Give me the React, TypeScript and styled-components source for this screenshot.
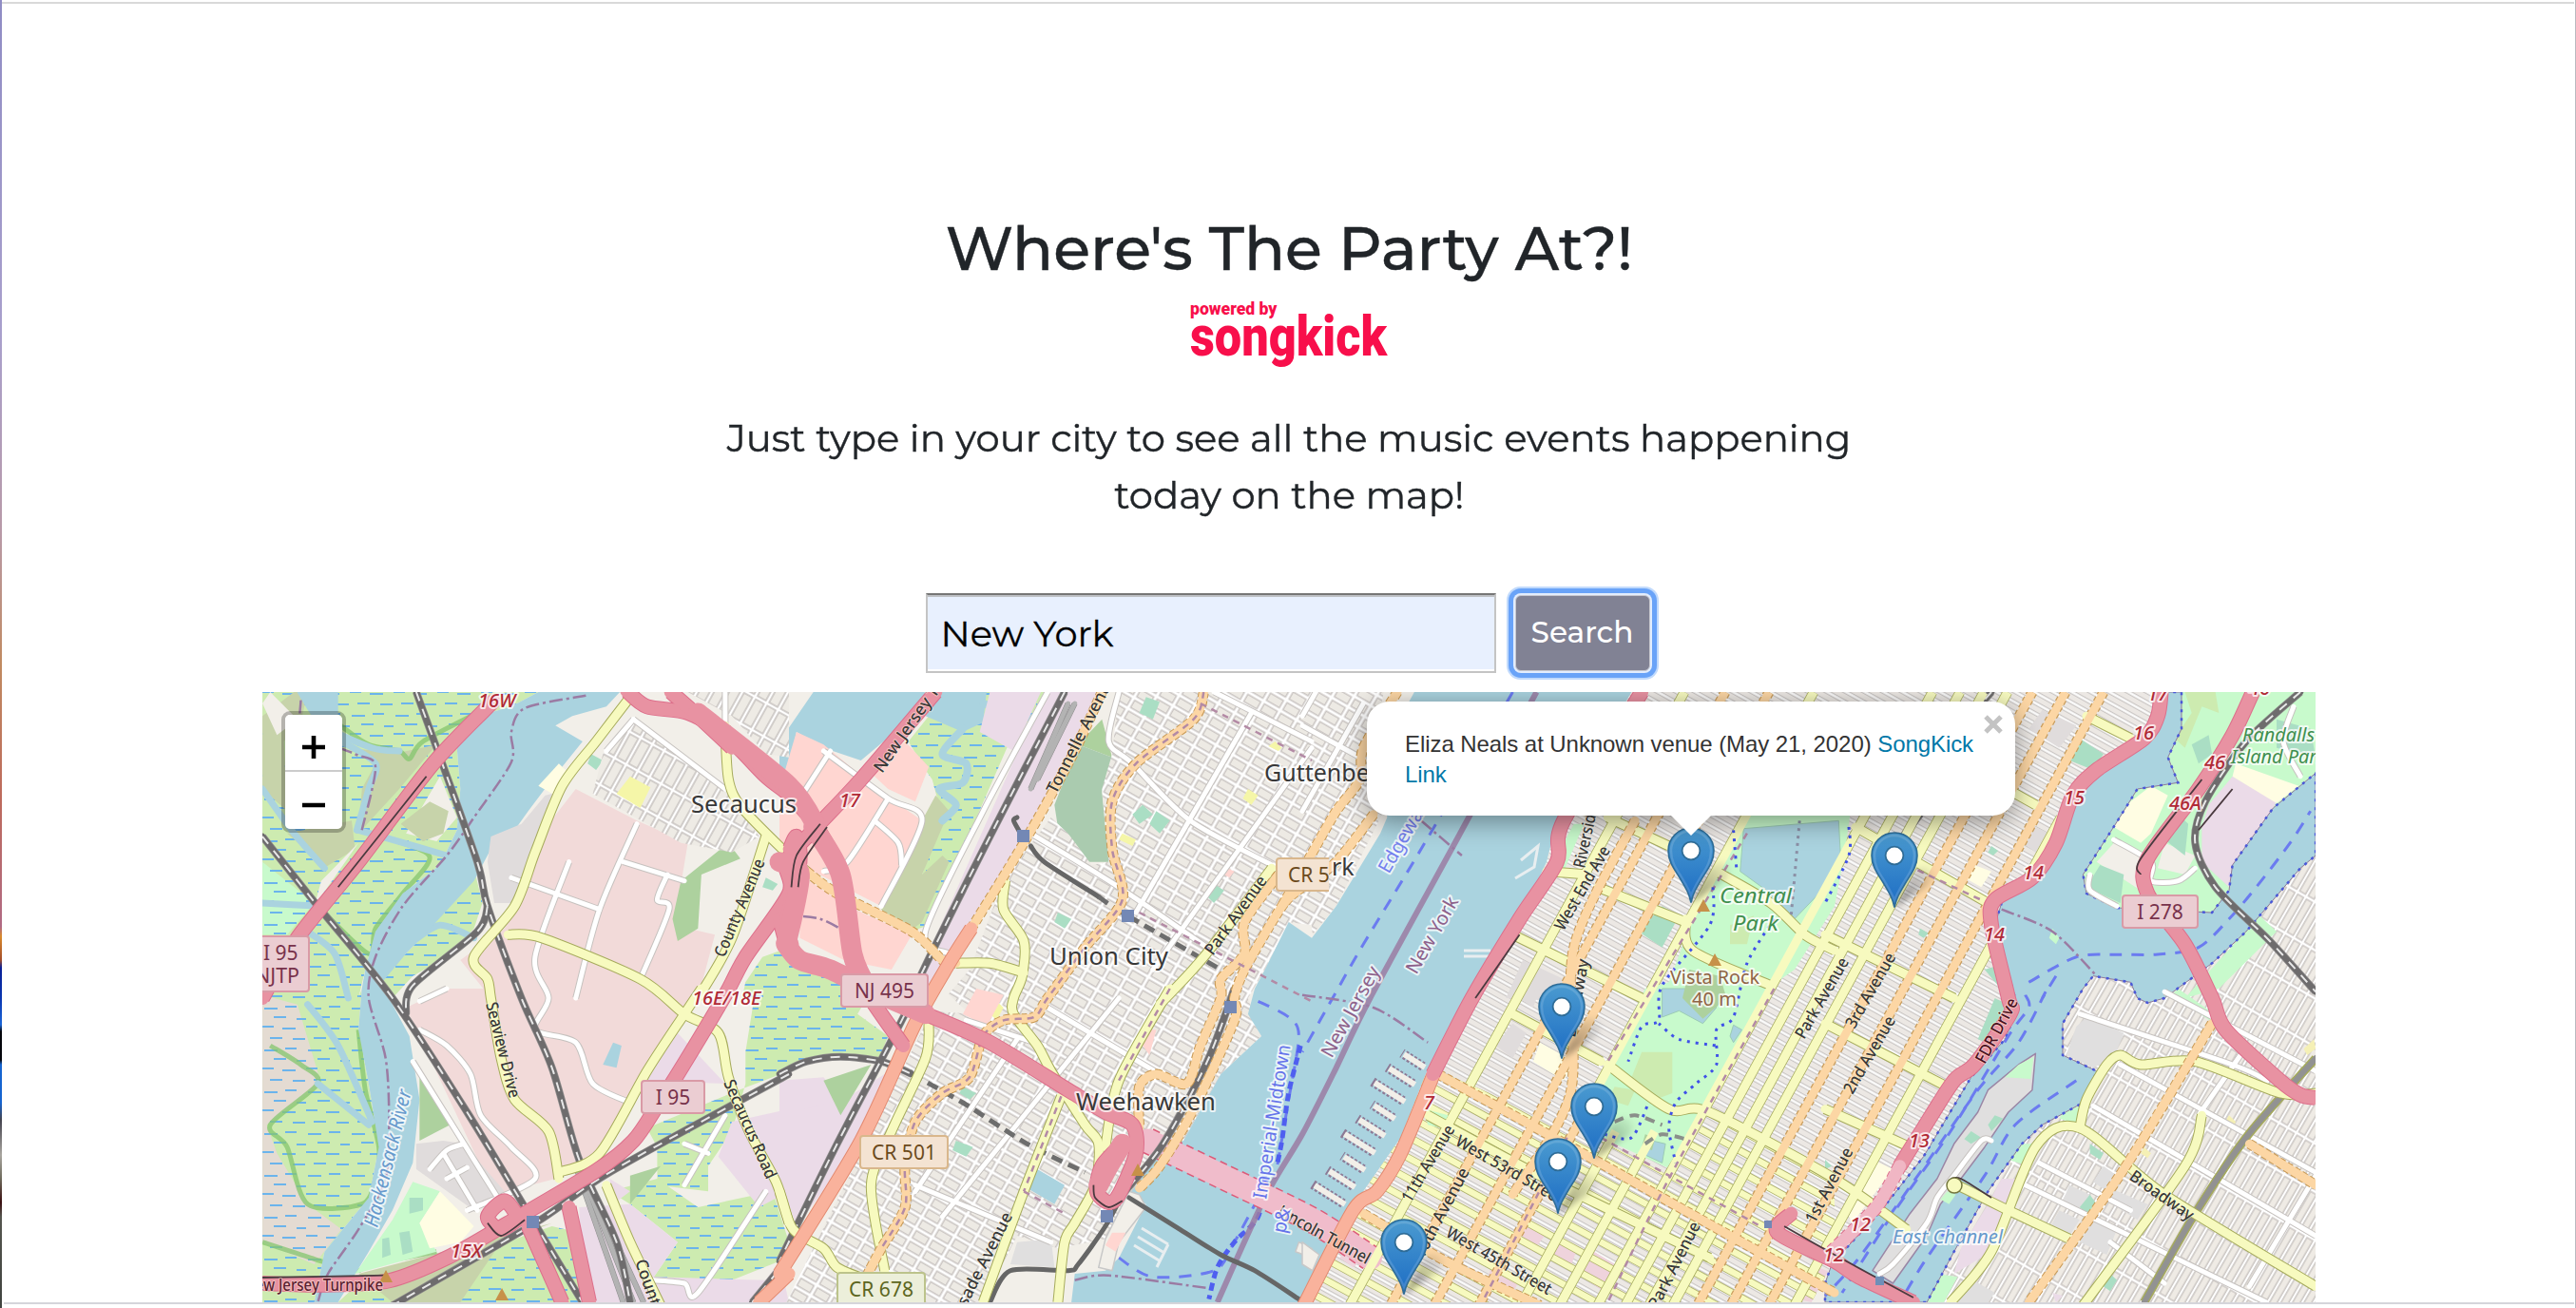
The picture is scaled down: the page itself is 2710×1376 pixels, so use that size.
import React, { useState } from "react";
import styled, { createGlobalStyle } from "styled-components";

const GlobalStyle = createGlobalStyle`
  *, *::before, *::after { box-sizing: border-box; }
  html, body { margin: 0; padding: 0; }
  body { background: #fff; color: #212529; font-family: Montserrat, Inter, sans-serif; overflow: hidden; }
`;

const Page = styled.div`
  display: grid;
  grid-template-columns: 2px 1fr 2px;
  height: 1376px;
  background: #fff;
`;

const DesktopEdge = styled.div`
  background: linear-gradient(180deg, #8f8cc4 0, #a9a0cc 350px, #b89aa8 560px, #c08a60 700px, #bd6a5c 840px,
    #b06a84 975px, #d98a2b 985px, #a34d2a 1010px, #0a1f96 1018px, #0a36b0 1050px, #1b66d8 1078px, #05060c 1085px,
    #05060c 1115px, #1664d0 1120px, #1664d0 1160px, #44434e 1178px, #a9a6a0 1215px, #6e6a5c 1240px, #3a0f10 1265px, #55564f 1280px, #40433f 1376px);
`;

const RightEdge = styled.div`
  background: linear-gradient(90deg, #fff 50%, #b9b9bf 50%);
`;

const Window = styled.main`
  display: flex;
  flex-direction: column;
  align-items: center;
  border-top: 2px solid #d9d9d9;
  margin-top: 2px;
  height: 1374px;
  padding-left: 2px;
`;

const Title = styled.h1`
  margin: 218px 0 0;
  font-size: 64px;
  line-height: 78px;
  font-weight: 500;
  white-space: nowrap;
  -webkit-text-stroke: 0.4px currentColor;
`;

const Stretch = styled.span<{ $x: number }>`
  display: inline-block;
  transform: scaleX(${(p) => p.$x});
`;

const Logo = styled.div`
  display: flex;
  flex-direction: column;
  width: 208px;
  height: 76px;
  margin-top: 15px;
  color: #f80f4b;
  font-family: Roboto, sans-serif;
`;

const PoweredBy = styled.span`
  font-size: 17.6px;
  line-height: 20px;
  font-weight: 900;
  white-space: nowrap;
`;

const Songkick = styled.span`
  font-size: 59px;
  line-height: 56px;
  font-weight: 900;
  margin-top: -9px;
  transform: scaleX(0.855);
  transform-origin: left;
  white-space: nowrap;
`;

const Lead = styled.p`
  margin: 40px 0 0;
  width: 1300px;
  text-align: center;
  font-size: 40px;
  line-height: 60px;
  font-weight: 400;
  -webkit-text-stroke: 0.4px currentColor;
`;

const SearchForm = styled.form`
  display: flex;
  align-items: center;
  gap: 20px;
  margin: 65px 0 0 5px;
  height: 100px;
`;

const CityInput = styled.input`
  width: 600px;
  height: 84px;
  padding: 2px 14px 2px;
  border: 2px solid #c4c4c4;
  border-top-color: #767676;
  border-radius: 0;
  background: #e8f0fe;
  box-shadow: inset 0 2px 0 #bfc1c5, inset 0 -2px 0 #fff;
  color: #000;
  font: 400 38.4px Montserrat, Inter, sans-serif;
  -webkit-text-stroke: 0.3px currentColor;
  outline: none;
`;

const SearchButton = styled.button`
  width: 142px;
  height: 80px;
  margin: 0 8px 0 0;
  padding: 0 0 2px;
  border: 1px solid #c9c9cf;
  border-radius: 6px;
  background: #818294;
  color: #fff;
  font: 500 31.2px Montserrat, Inter, sans-serif;
  box-shadow: 0 0 0 2px #e2edfe, 0 0 0 7px #69a3f8, 0 0 0 9px #c1dafc;
`;

const MapView = styled.section`
  position: relative;
  width: 2160px;
  height: 642px;
  margin-top: 12px;
  overflow: hidden;
  background: #aad3df;
`;

const BottomLine = styled.div`
  width: 100%;
  height: 2px;
  background: #d5d5da;
`;

const MapCanvas = styled.svg`
  display: block;
  width: 2160px;
  height: 642px;
`;

const ZoomControl = styled.div`
  position: absolute;
  left: 20px;
  top: 20px;
  width: 68px;
  border: 4px solid rgba(0, 0, 0, 0.25);
  border-radius: 9px;
  background-clip: padding-box;
  overflow: hidden;
`;

const ZoomButton = styled.button<{ $divided?: boolean }>`
  display: grid;
  place-items: center;
  width: 60px;
  height: ${(p) => (p.$divided ? 60 : 60)}px;
  padding: 9px 0 0;
  border: 0;
  border-bottom: ${(p) => (p.$divided ? "2px solid #ccc" : "0")};
  background: #fff;
`;

const Popup = styled.div`
  position: absolute;
  left: 1162px;
  top: 10px;
  width: 682px;
  height: 120px;
  padding: 29px 36px 0 40px;
  border-radius: 24px;
  background: #fff;
  color: #333;
  font: 24px/31.6px "Liberation Sans", Arial, sans-serif;
  letter-spacing: -0.07px;
  box-shadow: 0 6px 28px rgba(0, 0, 0, 0.4);
  &::after {
    content: "";
    position: absolute;
    left: 319px;
    top: 119px;
    border: 22px solid transparent;
    border-top-color: #fff;
    border-bottom: 0;
  }
`;

const PopupLink = styled.a`
  color: #0078a8;
  text-decoration: none;
`;

const CloseButton = styled.button`
  position: absolute;
  right: 13px;
  top: 14px;
  width: 20px;
  height: 20px;
  padding: 0;
  border: 0;
  background: none;
`;

const Pin = styled.svg<{ $x: number; $y: number }>`
  position: absolute;
  left: ${(p) => p.$x - 276 - 25}px;
  top: ${(p) => p.$y - 728 - 80}px;
  width: 100px;
  height: 82px;
  overflow: visible;
`;

/* ---------- map geometry ---------- */

// The map is surveyed in eight sheets, four columns by two rows.
// A point list names a sheet, then gives points in that sheet's own units.
const sheets: Record<string, [number, number]> = {
  A: [270, 720], B: [270, 1040], C: [820, 720], D: [820, 1040],
  E: [1370, 720], F: [1370, 1040], G: [1920, 720], H: [1920, 1040],
};

function points(src: string): [number, number][] {
  let sheet = sheets.A;
  const out: [number, number][] = [];
  src.trim().split(/\s+/).forEach((t) => {
    if (sheets[t]) { sheet = sheets[t]; return; }
    const [x, y] = t.split(",").map(Number);
    out.push([+(sheet[0] + x / 2.8).toFixed(1), +(sheet[1] + y / 3).toFixed(1)]);
  });
  return out;
}

const area = (src: string) => "M" + points(src).map((p) => p.join(" ")).join("L") + "Z";

function curve(src: string) {
  const p = points(src);
  let d = `M${p[0][0]} ${p[0][1]}`;
  for (let i = 0; i < p.length - 1; i++) {
    const a = p[i - 1] || p[i], b = p[i], c = p[i + 1], e = p[i + 2] || c;
    const k = 7;
    d += `C${b[0] + (c[0] - a[0]) / k} ${b[1] + (c[1] - a[1]) / k} ${c[0] - (e[0] - b[0]) / k} ${c[1] - (e[1] - b[1]) / k} ${c[0]} ${c[1]}`;
  }
  return d;
}

const Areas = ({ fill, list, stroke, sw }: { fill: string; list: string[]; stroke?: string; sw?: number }) => (
  <>{list.map((s, i) => <path key={i} d={area(s)} fill={fill} stroke={stroke} strokeWidth={sw} strokeLinejoin="round" />)}</>
);

const Roads = ({ list, w, fill, casing, dash, cw = 2, casingDash }: { list: string[]; w: number; fill: string; casing?: string; dash?: string; cw?: number; casingDash?: string }) => (
  <g fill="none" strokeLinejoin="round">
    {casing && list.map((s, i) => <path key={"c" + i} d={curve(s)} stroke={casing} strokeWidth={w + cw} strokeDasharray={casingDash} />)}
    {list.map((s, i) => <path key={i} d={curve(s)} stroke={fill} strokeWidth={w} strokeDasharray={dash} strokeLinecap={dash ? "butt" : "round"} />)}
  </g>
);

const marsh = [
  "A 17,24 830,24 750,70 650,100 590,200 600,330 590,460 540,570 430,660 350,780 320,900 300,990 B 310,0 300,130 330,300 360,500 330,660 200,830 170,990 17,990",
  "A 590,570 640,580 665,690 640,770 560,860 460,920 400,990 330,990 360,900 440,850 520,760",
  "B 300,930 600,850 870,750 950,770 970,990 240,990",
  "B 1150,440 1420,320 1568,260 1568,0 1470,0 1440,200 1440,300 1400,450 1330,560 1330,640 1180,620 1180,500",
  "B 1040,640 1180,600 1300,690 1520,640 1568,800 1540,860 1400,920 1170,910 1240,800 1100,680",
  "A 1568,830 1490,860 1440,940 1430,990 1568,990", "C 0,840 60,850 170,900 290,930 D 230,80 320,150 290,230 150,215 0,270",
  "C 480,24 800,24 670,200 560,470 440,760 330,800 300,700 420,600 480,420 450,300 430,270 380,180 440,100",
];
const heath = [
  "A 310,205 420,215 530,190 420,330 300,470 310,330 350,250", "A 17,100 110,24 150,24 130,120 80,180 90,400 17,330",
  "A 425,440 510,370 565,400 550,470 490,495", "A 90,470 280,430 290,520 205,575",
  "C 460,350 500,400 420,600 480,540 500,560 420,750 370,790 300,710 420,430", "B 300,900 870,740 720,800 600,990 400,990",
  "B 510,40 720,240 700,310 560,150", "B 620,370 740,520 720,530 660,450", "B 860,420 920,470 950,540 890,570",
];
const river = "A 830,24 1070,24 1030,70 930,100 880,130 960,180 870,300 800,400 760,460 690,520 640,620 520,760 440,850 370,940 390,990 B 450,150 480,350 460,550 400,700 330,830 240,990 170,990 200,830 330,660 360,500 330,300 300,130 310,0 A 320,900 350,780 430,660 540,570 590,460 600,330 590,200 650,100 750,70";
const hudson = "E 330,24 970,24 750,430 720,560 640,740 480,990 F 380,230 360,280 290,470 180,640 60,860 0,990 D 860,990 870,900 960,890 1000,850 1080,680 1030,650 1120,520 1190,480 1300,270 1420,150 1380,80 1400,0 C 1430,900 1500,750 1568,800 E 100,700 230,470 250,420 240,200";
const eastRiver = "G 1000,24 980,90 930,190 800,290 740,360 690,510 610,610 520,690 500,760 560,990 H 560,80 530,160 430,280 290,530 180,680 20,870 0,930 0,990 300,990 380,830 480,640 580,490 640,430 760,360 790,290 800,260 700,210 700,110 760,0 G 790,920 900,940 920,990 H 950,45 1000,30 G 1000,990 1140,880 1240,780 1400,580 1445,540 1445,280 1320,390 1200,570 1190,650 1140,720 860,705 770,660 760,600 850,450 920,330 1040,310 1010,230 1050,140 1050,24";
const manhattan = "E 970,24 G 1000,24 980,90 930,190 800,290 740,360 690,510 610,610 520,690 500,760 560,990 H 560,80 530,160 430,280 290,530 180,680 20,870 F 1500,990 0,990 60,860 180,640 290,470 360,280 E 480,990 640,740 720,560 750,430";
const park = "E 1310,400 G 75,400 60,520 E 1568,700 1450,900 F 1370,0 1190,375 1075,565 880,470 880,280 930,190 1010,0 E 1080,940 1150,740 1210,590";

// Avenues share one bearing; each is known by where it meets the top of the map.
const BEARING = 0.546;
const avenue = (x0: number, y1: number, y2: number) =>
  `M${x0 - BEARING * (y1 - 728)} ${y1}L${x0 - BEARING * (y2 - 728)} ${y2}`;
const primaryAvenues: [number, number, number][] = [
  [1815, 728, 1376], [1861, 728, 1376], [2138, 728, 1376], [2173, 728, 1376], [2213, 728, 1376], [1908, 1160, 1376],
];
const secondaryAvenues: [number, number, number][] = [
  [1772, 728, 1376], [1908, 728, 1180], [2033, 728, 1376], [2062, 728, 1376], [2087, 728, 1376], [2112, 728, 1376], [2240, 860, 1376], [1952, 1190, 1376], [1993, 1190, 1376],
];
const streets: string[] = [];
for (let i = 0; i < 40; i++) {
  const y0 = 1035 + i * 22 - 0;
  streets.push(`M1370 ${y0 - 340 + 340 - 340 + 0}L2170 ${y0 - 340 + 437}`);
}

const motorways = [
  "A 700,50 520,250 300,560 120,800 17,990", "B 17,930 200,935 390,922 560,850 740,740 1000,575 1110,480 1180,370 1240,270 1380,20 A 1440,860 1568,660 C 20,560 100,460 240,300 460,24",
  "A 1090,20 1150,70 1270,90 1380,160 1500,290 C 30,350 110,450 180,600 215,850 250,960 D 365,180",
  "A 1568,820 C 20,820 60,870 150,900 D 300,20 430,80 620,170 850,320 960,390 1040,430 1050,520 1000,650 970,675 935,640 950,560 1010,490",
  "C 0,740 20,820", "A 1220,24 1290,90 1400,200", "C 20,740 60,560 50,480 30,520",
  "E 1000,24 770,430 750,560 640,740 500,990 F 385,270",
  "G 1260,24 1200,160 1100,330 950,550 950,660 1060,820 1140,990 H 1180,130 1340,290 1400,335 1445,345",
  "G 990,24 980,100 940,170 800,270 730,350 680,500 610,610 500,680 490,760 540,990 H 545,80 440,240 380,290 290,440 220,560",
  "F 1440,710 1400,770 1568,860 H 100,910 260,990", "B 800,750 900,990", "B 920,690 980,990", "B 770,720 730,670 680,720 720,760 780,720",
];
const trunks = ["C 565,770 500,880 D 400,110 240,480 0,900", "F 385,275 290,520 220,640 150,700 0,1010", "B 1568,900 1480,990"];
const primaries = [
  "C 950,24 860,230 720,500 565,770", "C 1250,24 1220,110 1050,250 980,370 980,520 1010,680 900,830 790,990 D 750,90 660,100 600,150 560,280 480,330 400,420 370,560 370,690 300,820 260,900",
  "C 80,590 170,660 390,780 480,870 520,880", "C 1470,600 1370,750 1370,850 1300,930 1300,990 D 1240,180 1200,300 1110,270 1060,310 1060,440",
  "E 280,24 180,200 170,300 100,400 30,530 C 1480,700", "E 210,410 100,560 E 0,640 C 1480,700 1370,900 1340,990 D 1340,100 1220,380 1120,560 1060,630",
  "F 400,270 860,540 1260,780 1568,960", "F 180,710 440,870 700,1000", "H 1140,110 880,570 600,990", "H 1250,490 1445,620",
  "E 980,430 800,830 F 790,330 620,650",
];
const secondaries = [
  "A 1100,40 1000,180 900,320 820,530 760,700 640,860 680,930 690,990 B 720,220 760,350 860,450 890,600", "A 740,790 840,800 1130,930 B 1260,80 1360,140 1390,280 1450,450 1530,610 1568,740",
  "B 1310,0 1260,80 1150,260 1010,520 890,580", "A 1500,480 1400,800 1300,990", "A 1380,130 1390,300 1430,390 1568,540 C 80,590", "B 1030,620 1100,800 1190,1000",
  "C 520,880 620,880 720,910", "C 665,620 660,710 720,810 715,920 690,990 D 690,80 760,180 800,260 900,430 940,490 930,620 870,740 840,800 820,990",
  "D 440,110 430,220 330,450 270,620 310,890", "D 1150,0 1000,290 960,500", "D 830,340 720,640 600,990", "C 1450,580 1250,860 1120,1010", "D 0,640 40,760 130,820 170,880 260,920",
  "E 620,790 1000,990", "E 870,640 1130,750", "E 900,420 1080,510", "E 720,590 840,600", "F 620,80 880,230", "E 1220,590 1380,690 1480,790 1568,840",
  "F 900,240 1080,380 1200,390 1568,600 H 240,760", "E 1130,740 1150,840 1380,950", "G 90,450 480,690", "G 0,790 380,990", "H 0,110 360,310", "H 0,380 250,500", "G 770,100 900,170", "G 520,320 620,380", "F 370,400 700,590 1200,850",
  "H 370,990 490,830 620,500 750,440 1000,650 1445,940", "H 750,440 770,350 830,240 870,210 930,240 1090,230 1340,330 1445,330", "H 1110,400 1060,560 760,1000", "H 390,620 540,700 720,790",
];
const minorRoads = [
  "A 1110,110 1380,330", "A 1110,110 1030,210", "A 1120,440 1010,710 940,990", "A 750,610 1010,710", "A 1080,560 1260,620", "A 1210,600 1180,680 1215,710 1130,930", "A 920,560 820,860 860,990 B 820,130 940,170 990,300 1100,360",
  "A 1380,24 1380,130", "B 480,40 560,0", "B 480,130 560,180 630,270 660,400 750,500 820,600 620,700", "B 460,230 710,660", "B 550,520 650,700", "B 510,570 560,510 610,490", "B 560,600 620,565", "C 130,210 320,360 420,430 300,700", "C 150,210 60,360", "C 320,360 200,560 130,590", "C 280,430 350,500 360,570",
  "C 790,24 600,400 430,780 500,850", "C 1000,24 970,180 1040,250 1210,430 1450,570", "C 1390,90 1050,720", "C 1568,200 1100,900", "C 740,470 1000,640 1300,860", "C 1280,24 1568,180", "D 790,60 1120,270", "D 1000,30 480,720", "D 700,160 400,640", "D 400,620 800,800", "D 550,100 780,180",
  "H 750,80 1200,240 1300,290", "H 870,240 1445,580", "H 790,370 1445,780", "H 590,620 1300,990", "H 630,550 900,700", "H 1230,200 1100,400", "H 1000,10 1445,260", "H 1445,590 1250,940", "H 840,800 1000,930", "H 160,900 200,870 300,740 330,660 380,590 460,480 490,480", "G 780,600 780,650 860,700", "G 850,490 960,560 960,620 1040,620 1090,580", "G 1380,70 1350,180 1400,290",
  "E 40,24 0,100", "E 180,60 0,400", "E 0,130 170,230", "B 1170,920 1260,930 1300,960 1500,640", "B 1380,400 1260,620", "B 1260,490 1330,520",
];
const rails = [
  "A 470,24 530,200 650,560 680,700 780,990 B 870,250 950,540 1060,800 1100,990", "A 17,480 180,700 400,990 B 620,390 790,690 960,990", "A 680,700 650,780 460,950 B 440,80",
  "B 1568,270 1040,580 820,740 400,1000", "C 840,24 620,480 420,910 D 370,80 170,490 0,860", "D 0,270 80,230 180,215 300,230 390,270", "B 1568,850 1460,990",
  "D 1340,0 1260,230 1130,490 1010,650", "G 1400,24 1240,180 1120,370 1090,500 1150,640 1310,810 1445,970", "G 280,410 230,480", "G 490,24 460,60",
];
const darkRails = ["D 1010,650 960,750 880,870 850,890 680,890 620,990", "C 740,510 780,560 940,670", "D 1030,660 1180,760 1300,840 1400,890 1530,980", "C 700,420 690,430 710,470"];

const labelFont = '"Noto Sans", "Open Sans", sans-serif';
type LabelSpec = { t: string; x: number; y: number; s?: number; r?: number; c?: string; i?: boolean; b?: number; w?: number };
const exit = "#b02a36";
const labels: LabelSpec[] = [
  { t: "Secaucus", x: 727, y: 855, s: 25, w: 111 }, { t: "Guttenberg", x: 1330, y: 822, s: 25 }, { t: "Union City", x: 1104, y: 1015, s: 25, w: 125 }, { t: "Weehawken", x: 1132, y: 1168, s: 25, w: 147 },
  { t: "rk", x: 1401, y: 921, s: 25 },
  { t: "County Avenue", x: 762, y: 1008, r: -67, w: 110 }, { t: "Seaview Drive", x: 511, y: 1056, r: 76, w: 103 }, { t: "New Jersey Turnpike", x: 257, y: 1358, c: "#5a2030", w: 146 }, { t: "Secaucus Road", x: 761, y: 1139, r: 66, w: 112 }, { t: "County Road", x: 668, y: 1327, r: 71 },
  { t: "New Jersey Turnpike", x: 928, y: 814, r: -55 }, { t: "Tonnelle Avenue", x: 1111, y: 836, r: -63 }, { t: "Park Avenue", x: 1276, y: 1006, r: -54, w: 98 }, { t: "Palisade Avenue", x: 1003, y: 1402, r: -63, w: 138 },
  { t: "Lincoln Tunnel", x: 1343, y: 1278, r: 29, w: 108 }, { t: "Riverside Drive", x: 1667, y: 914, r: -78, w: 108 }, { t: "West End Ave", x: 1645, y: 980, r: -60, w: 99 }, { t: "Broadway", x: 1657, y: 1092, r: -80 }, { t: "11th Avenue", x: 1484, y: 1266, r: -59, w: 91 }, { t: "10th Avenue", x: 1497, y: 1325, r: -62, w: 105 },
  { t: "West 53rd Street", x: 1530, y: 1204, r: 30, w: 127 }, { t: "West 45th Street", x: 1520, y: 1300, r: 30, w: 125 }, { t: "Park Avenue", x: 1898, y: 1094, r: -60, w: 95 }, { t: "Park Avenue", x: 1744, y: 1378, r: -63, w: 100 }, { t: "1st Avenue", x: 1909, y: 1288, r: -62, w: 87 }, { t: "3rd Avenue", x: 1951, y: 1083, r: -60, w: 88 }, { t: "2nd Avenue", x: 1949, y: 1152, r: -60, w: 91 },
  { t: "FDR Drive", x: 2088, y: 1120, r: -62, w: 75, c: "#4a1020" }, { t: "Broadway", x: 2239, y: 1240, r: 35, w: 78 },
  { t: "Hackensack River", x: 397, y: 1292, r: -76, s: 21, c: "#6699cc", i: true, w: 148 }, { t: "East Channel", x: 1991, y: 1308, s: 20, c: "#6699cc", i: true, w: 116 },
  { t: "Edgewater", x: 1461, y: 920, r: -60, s: 20, c: "#7480ee" }, { t: "New York", x: 1490, y: 1026, r: -60, s: 20, c: "#8d618b", w: 90 }, { t: "New Jersey", x: 1401, y: 1114, r: -61, s: 20, c: "#8d618b", w: 106 }, { t: "Imperial-Midtown", x: 1332, y: 1262, r: -81, s: 20, c: "#6674ea", w: 164 }, { t: "p&", x: 1352, y: 1298, r: -78, s: 20, c: "#6674ea", w: 26 },
  { t: "Central", x: 1809, y: 950, s: 21, c: "#3f8f4e", i: true, w: 76 }, { t: "Park", x: 1823, y: 979, s: 21, c: "#3f8f4e", i: true, w: 48 }, { t: "Vista Rock", x: 1757, y: 1035, s: 19, c: "#8f6445", w: 94 }, { t: "40 m", x: 1780, y: 1058, s: 19, c: "#8f6445", w: 47 },
  { t: "Randalls", x: 2359, y: 780, s: 20, c: "#3f8f4e", i: true, w: 76 }, { t: "Island Park", x: 2347, y: 803, s: 20, c: "#3f8f4e", i: true, w: 100 },
  ...([["16W", 503, 744], ["16E/18E", 728, 1057], ["15X", 474, 1323], ["17", 883, 849], ["14", 2128, 925], ["14", 2087, 990], ["15", 2171, 846], ["16", 2244, 778], ["17", 2259, 737], ["46", 2319, 809], ["46A", 2282, 852], ["46", 2366, 731], ["13", 2008, 1207], ["12", 1946, 1295], ["12", 1918, 1327], ["7", 1498, 1167]] as [string, number, number][]).map(([t, x, y]) => ({ t, x, y, s: 20, c: exit, i: true, b: 500 })),
];

const Shield = ({ x, y, w, text, bg = "#ebcdd2", border = "#d99aa6", ink = "#78324b" }: { x: number; y: number; w: number; text: string; bg?: string; border?: string; ink?: string }) => (
  <g>
    <rect x={x} y={y} width={w} height={34} rx={3} fill={bg} stroke={border} strokeWidth={2} />
    <text x={x + w / 2} y={y + 25} textAnchor="middle" fontSize={21} fontFamily={labelFont} fill={ink}>{text}</text>
  </g>
);

const pins: [number, number][] = [[1779, 950], [1993, 955], [1643, 1114], [1677, 1219], [1639, 1277], [1477, 1362]];

function MapDrawing() {
  return (
    <MapCanvas viewBox="276 728 2160 642">
      <defs>
        <pattern id="marsh" width="46" height="44" patternUnits="userSpaceOnUse">
          <path d="M2 5h14M24 3h12M12 14h13M36 16h10M0 24h12M21 26h14M8 36h13M32 37h13" stroke="#6bb4ec" strokeWidth="2.2" />
        </pattern>
        <pattern id="hatch" width="14" height="32" patternUnits="userSpaceOnUse" patternTransform="rotate(29)">
          <rect width="14" height="32" fill="#fff" />
          <rect x="2" y="2" width="10" height="28" fill="#eeebe5" stroke="#c9c4c1" strokeWidth="1.6" />
        </pattern>
        <pattern id="hatchWide" width="20" height="13" patternUnits="userSpaceOnUse" patternTransform="rotate(30)">
          <rect width="20" height="13" fill="#fff" />
          <rect x="2.2" y="2.2" width="15.6" height="8.6" fill="#edeae4" stroke="#c9c4c1" strokeWidth="1.5" />
        </pattern>
        <pattern id="rows" width="44" height="9.6" patternUnits="userSpaceOnUse" patternTransform="rotate(29)">
          <rect width="44" height="9.6" fill="#ece8e4" />
          <path d="M0 2.4h44" stroke="#bfbbb9" strokeWidth="4.4" />
          <path d="M0 2.4h44" stroke="#fff" strokeWidth="2.6" />
        </pattern>
        <pattern id="queens" width="10.5" height="44" patternUnits="userSpaceOnUse" patternTransform="rotate(30)">
          <rect width="10.5" height="44" fill="#fff" />
          <rect x="1.8" y="2" width="7" height="40" fill="#efebe5" stroke="#c9c4c1" strokeWidth="1.4" />
        </pattern>
        <clipPath id="island"><path d={area(manhattan)} /></clipPath>
        <clipPath id="midtown"><path d={area("F 340,250 400,260 880,480 1080,590 1200,400 1568,600 1568,1000 0,1000 60,860 180,640")} /></clipPath>
      </defs>

      <rect x="276" y="728" width="2160" height="642" fill="#f2efe9" />
      <Areas fill="#cdebb0" list={marsh} />
      <Areas fill="#e4dbd2" list={["B 17,20 120,50 190,300 30,430 60,520 150,680 250,760 170,870 17,800"]} />
      <Areas fill="#c8facc" list={["A 17,560 170,690 90,790 17,790"]} />
      <Areas fill="url(#marsh)" list={marsh} />
      <Areas fill="#c7d3aa" list={heath} />
      <Areas fill="#f2efe9" list={["A 440,470 480,400 540,290 590,420 530,495", "A 17,60 40,24 120,110 60,160", "A 300,500 170,700 190,620"]} />
      <Areas fill="#c7d3aa" list={["A 425,440 510,370 565,400 550,470 490,495"]} />
      <g fill="none" stroke="#84c66e" strokeOpacity=".75" strokeWidth="5">
        <path d={curve("A 150,40 260,140 330,190 420,210 450,235 490,180 650,90")} />
        <path d={curve("A 400,490 510,545 430,660 350,770 330,850 190,710")} />
        <path d={curve("B 40,180 130,240 180,300 40,430 90,500 150,680 310,680 350,600 360,500 320,320 300,130")} />
        <path d={curve("B 17,800 160,850 290,890 340,870 530,830")} />
      </g>
      <Roads list={["A 130,24 200,130 340,200 420,210", "A 250,180 350,250 330,330 295,460", "A 300,460 400,490 560,540", "A 17,330 110,470 200,580", "A 150,780 230,850 270,990", "B 150,50 240,180 340,420", "B 180,300 330,430", "A 17,690 190,700", "A 450,820 540,760 640,800"]} w={7} fill="#aad3df" />
      <Areas fill="#aad3df" list={[river, "C 100,24 480,24 240,240 130,200 50,150 30,260 0,300 0,180", "C 480,24 610,24 600,120 540,150 430,100", "A 1568,180 1550,260 1568,280", "A 120,24 240,24 240,110 170,100"]} />
      <Roads list={["C 540,140 480,220 550,250 540,310 470,330 520,380 480,430", "C 600,60 780,120"]} w={8} fill="#aad3df" />

      <Areas fill="#f2dad9" list={["A 940,330 1120,430 1270,500 1230,760 1350,790 1300,990 690,990 600,870 730,770 790,640 860,440", "B 440,60 560,0 1300,0 1200,180 1120,300 1010,520 960,540 890,580 880,600 700,650", "C 240,530 350,500 380,560 300,690 250,570"]} />
      <Areas fill="#e0dcdc" list={["A 690,480 780,440 850,350 890,340 820,530 760,690 700,690 680,560", "B 470,490 550,480 610,490 730,640 640,700 470,570"]} />
      <Areas fill="#ffd6d1" list={["C 50,150 130,190 300,340 420,430 300,700 100,590 0,540 0,330", "C 60,600 200,700 390,790 330,900 190,870 60,800", "C 270,280 370,180 440,260 400,370 320,330", "D 580,0 660,20 610,130 540,80"]} />
      <Areas fill="#ebdbe8" list={["B 1240,140 1380,300 1130,290", "B 1400,420 1568,380 1568,640 1480,690 1360,530", "D 0,290 130,280 190,360 120,460 0,400", "D 0,400 190,350 340,250 360,180 240,480 50,750 0,600", "C 780,24 960,24 820,340 740,440 440,990 380,990", "C 620,24 770,24 690,210 590,150", "B 950,690 1100,680 1240,800 1170,910 1500,920 1540,860 1568,990 960,990", "B 1040,600 1100,640 1050,680"]} />
      <Areas fill="#c8facc" list={["B 460,610 540,640 480,740 530,830 290,900 400,730", "D 1110,560 1190,570 1140,640 1080,620"]} />
      <Areas fill="#aadec4" list={["B 370,790 390,785 395,840 370,850", "B 420,770 450,765 460,830 430,840", "B 450,660 490,660 490,700 450,710", "A 1500,610 1535,630 1520,650 1490,640", "A 985,220 1020,240 1000,270 975,250"]} />
      <Areas fill="#fffde3" list={["B 540,640 640,750 600,800 510,820 480,740", "A 890,250 930,290 880,350 830,320"]} />
      <Areas fill="#add19e" list={["A 1390,500 1425,550 1310,600 1300,770 1240,810 1225,740 1250,620", "B 480,270 570,430 480,480", "B 1100,590 1190,560 1100,680", "D 130,290 270,240 180,400", "C 880,190 950,110 980,230"]} />
      <Areas fill="#aacbaf" list={["C 880,190 980,230 950,340 970,560 910,560 820,450 810,380", "C 850,590 970,700 930,755 820,670", "C 650,825 790,810 830,880 800,910 720,880 640,870"]} />

      <Areas fill="url(#hatch)" list={["A 1100,110 1380,330 1480,480 1400,530 1250,500 990,345 1020,220", "A 1270,24 1568,24 1568,230 1500,220 1400,100"]} />
      <Areas fill="url(#hatchWide)" list={["C 1000,24 E 240,24 190,330 240,400 100,700 30,790 C 1568,760 1500,750 1430,900 1380,990 D 1420,150 1300,270 1190,480 960,790 820,820 700,780 600,990 20,990 440,90 C 560,900 660,620 730,520 800,420 850,470 920,570 970,560 950,330 980,220"]} />
      <Areas fill="#f2efe9" list={["D 480,0 560,80 440,70", "D 900,870 1050,700 960,890"]} />
      <Areas fill="#e0dfdf" list={["D 700,800 800,790 810,880 680,870", "C 1480,800 1540,790 1520,860 1470,840"]} />
      <Areas fill="#aadec4" list={["C 1070,380 1100,410 1060,440 1040,410", "C 1110,400 1150,430 1120,470 1090,440", "C 1280,630 1310,650 1280,690 1260,670", "D 540,310 580,330 560,350 530,330", "D 520,480 570,500 550,530 510,510", "C 1080,40 1120,55 1100,110 1060,90", "C 820,720 860,740 840,770 810,750"]} />
      <Areas fill="#f5f6a8" list={["C 1380,330 1410,350 1390,380 1365,360", "C 1010,470 1050,490 1040,510 1000,490", "C 1460,180 1480,200 1470,210 1440,195", "A 1100,290 1160,325 1130,390 1060,345", "D 640,40 660,60 640,100 620,80"]} />
      <Areas fill="#ffd6d1" list={["D 1080,130 1110,130 1090,210 1070,180", "C 1320,580 1340,590 1325,610 1310,600", "D 580,0 660,20 610,120 540,80"]} />
      <Areas fill="#aad3df" list={[hudson, "D 760,570 840,620 810,680 730,630", "B 1050,170 1075,180 1060,250 1020,240"]} />
      <Areas fill="#f2efe9" stroke="#c8c8c8" sw={1.5} list={["D 1000,800 1080,690 1060,650 1030,640 960,790 940,880 980,890", "D 1530,800 1568,820 1568,850 1520,830", "F 0,800 50,840 30,890 0,870"]} />
      <Areas fill="#ffd6d1" list={["D 980,770 1020,770 990,830 960,810"]} />
      {[0, 1, 2, 3, 4, 5, 6, 7, 8].map((i) => (
        <path key={i} d={`M${1497 - i * 10.5} ${1122 + i * 18}l-${22 + (i % 3) * 5} -${14 + (i % 3) * 3}`} stroke="#8d7a95" strokeWidth="10" strokeDasharray="3 2" fill="none" />
      ))}
      {[0, 1, 2, 3, 4, 5, 6, 7, 8].map((i) => (
        <path key={i} d={`M${1499 - i * 10.5} ${1123 + i * 18}l-${22 + (i % 3) * 5} -${14 + (i % 3) * 3}`} stroke="#f2efe9" strokeWidth="6" fill="none" />
      ))}
      <path d="M1201 1292l28 17M1197 1301l28 17M1193 1310l28 17M1229 1309l-12 24M1600 905l18-15l-4 22l-20 12M1540 1000h28M1540 1006h28" stroke="#e8eef0" strokeWidth="3" fill="none" />

      <g clipPath="url(#island)">
        <path d={area(manhattan)} fill="url(#rows)" />
        <Areas fill="#e0dcdc" list={["E 650,870 830,960 760,1000 600,990", "F 700,0 680,60 640,30", "G 640,80 740,130 690,200 600,140", "G 600,440 660,470 620,530 570,490", "F 620,110 660,140 620,220 570,180"]} />
        <Areas fill="#fffde3" list={["F 700,170 800,230 770,290 680,230", "G 440,570 490,590 460,640 410,610", "H 140,540 200,570 80,740 60,700"]} />
        <Areas fill="#aadec4" list={["G 750,170 820,220 790,270 720,240", "G 490,510 510,525 495,540 480,530", "G 280,770 305,785 290,800 275,790", "H 0,540 20,560 0,570", "E 1060,700 1110,730 1060,830 990,780", "G 500,890 540,990 470,900", "H 500,30 540,50 480,170 450,160"]} />
        <Areas fill="#efd3dc" list={["F 660,730 720,770 680,830 620,790", "F 860,830 920,870 880,950 800,890", "F 760,790 810,820 790,880 720,840", "F 560,870 640,920 620,960 540,930", "F 160,780 200,840 150,880 110,850", "F 1520,880 1568,900 1500,990 1460,980"]} />
        <g clipPath="url(#midtown)" fill="none">
          {streets.map((d, i) => <path key={i} d={d} stroke="#aeb269" strokeWidth="8" />)}
          {streets.map((d, i) => <path key={i} d={d} stroke="#f7fabf" strokeWidth="6.5" />)}
        </g>
        <g fill="none">
          {secondaryAvenues.map((a, i) => <path key={i} d={avenue(...a)} stroke="#a6ab5c" strokeWidth="10.5" />)}
          {primaryAvenues.map((a, i) => <path key={i} d={avenue(...a)} stroke="#c99d5c" strokeWidth="11" strokeDasharray="5 3" />)}
        </g>
      </g>
      <Areas fill="#c8facc" list={[park, "E 800,440 830,440 770,590 720,600", "F 360,380 430,400 410,440 370,430"]} />
      <Areas fill="#cdebb0" list={["F 1000,200 1090,200 1090,330 1040,350 970,280", "F 920,310 980,320 960,370 900,350", "E 1260,760 1330,730 1310,820 1260,820"]} />
      <Areas fill="#aad3df" stroke="#9ccbb5" sw={1} list={["E 1300,455 G 40,430 45,530 E 1540,640 1450,740 1400,720 1380,660 1290,590", "E 1060,960 1180,960 F 1220,60 1180,110 1110,70 1060,90", "F 1030,480 1070,490 1060,550 1000,520", "F 1270,115 1295,130 1270,170 1260,150"]} />
      <Areas fill="#add19e" list={["E 1140,900 1230,920 F 1250,30 1180,95 1120,30", "F 1010,460 1040,470 1030,510 1000,500"]} />

      <Areas fill="url(#queens)" list={["H 760,0 G 800,920 900,940 920,990 H 950,45 1000,20 G 1000,990 1140,880 1400,580 1445,540 H 1445,990 300,990 380,830 580,490 640,430 760,360 800,260 700,210 700,110"]} />
      <Areas fill="#e0dfdf" list={["H 770,90 880,140 850,220 790,250 710,210 740,120", "H 720,620 780,650 750,710 700,670", "H 790,720 860,760 830,840 750,800", "H 840,630 950,680 920,730 830,670", "H 690,700 750,730 720,780 660,760", "H 820,560 860,590 830,640 790,610", "H 420,910 500,960 480,990 380,990"]} />
      <Areas fill="#ebdbe8" list={["H 520,600 590,600 540,700 490,830 380,900 400,820 480,680", "H 670,960 700,970 680,990"]} />
      <Areas fill="#c8facc" list={["H 580,490 640,490 600,560 540,540", "H 700,390 750,370 750,430 690,410", "H 330,900 390,910 350,990 290,990", "H 1040,0 1160,90 1160,120 1020,20", "G 1280,730 1330,780 1160,960 1060,990"]} />
      <Areas fill="#aadec4" list={["H 780,650 800,680 770,710 750,690", "H 840,900 860,920 840,955 820,940", "H 780,490 820,520 810,540 780,520"]} />
      <Areas fill="#f5f0b5" list={["H 1190,400 1210,420 1200,440 1175,425", "H 1440,160 1445,190 1420,210 1410,190", "H 940,500 960,520 950,535 930,520"]} />
      <Areas fill="#c8facc" list={["G 1050,24 1445,24 1445,280 1320,390 1200,570 1190,650 1140,720 860,705 770,660 760,600 850,450 920,330 1040,310 1010,230 1050,140"]} />
      <Areas fill="#ebdbe8" list={["G 1200,290 1330,370 1190,640 1110,560 1110,450 1130,380"]} />
      <Areas fill="#f2efe9" list={["G 860,490 950,540 930,650 800,560", "G 1000,500 1090,540 1060,600 980,580"]} />
      <Areas fill="#fffde3" list={["G 1210,250 1395,320 1330,375 1200,290", "G 960,320 1010,350 960,470 930,500 850,450 900,370"]} />
      <Areas fill="#aadec4" list={["G 810,570 880,600 870,690 770,640", "G 1080,190 1130,160 1140,220 1100,250", "G 1050,420 1070,440 1060,540 1000,490", "G 1330,110 1430,140 1445,230 1330,200"]} />
      <Areas fill="#cdebb0" list={["G 1060,24 1150,24 1160,90 1110,70 1060,200 1030,170 1080,90"]} />
      <Areas fill="#aad3df" list={[eastRiver]} stroke="#8d7a9a" sw={1} />
      <path d={area(eastRiver)} fill="none" stroke="#4a58d8" strokeWidth="2.5" strokeDasharray="3 6" />
      <Areas fill="#e0dfdf" stroke="#9a86a5" sw={1.5} list={["H 620,205 570,240 480,320 450,390 380,490 330,600 250,710 140,890 200,930 300,780 340,680 400,600 470,500 540,390 610,320"]} />
      <Areas fill="#c8facc" list={["H 615,215 570,240 530,280 605,285", "H 360,640 385,650 365,680 340,665", "G 670,770 690,800 680,820 660,800"]} />
      <Areas fill="#aadec4" list={["H 430,450 460,470 430,490 410,475", "H 500,400 525,410 490,450 480,430"]} />

      <g fill="none" stroke="#6b7bf0" strokeWidth="3" strokeDasharray="13 10">
        {["E 620,24 350,520 180,820 100,970 F 0,200", "D 1410,40 1500,90 1530,150 1500,350 1460,600", "D 1000,850 1100,910 1280,890 1340,800 1440,600", "H 650,10 570,170 450,320 280,580 100,850 0,970", "H 590,20 600,60 540,150 370,450 200,710 50,960", "H 740,290 560,430 470,590 300,850 220,990", "G 600,940 740,860 860,853 980,852 1100,830 1190,740 1270,640 1370,500 1430,400", "G 680,920 640,990"].map((s, i) => <path key={i} d={curve(s)} />)}
      </g>
      <g fill="none" stroke="#4f5ff0" strokeWidth="5" strokeDasharray="8 5">
        {["D 1430,590 1410,720 1340,800 1290,880 1265,980", "D 1535,180 1500,330 1480,480 1465,560"].map((s, i) => <path key={i} d={curve(s)} />)}
      </g>
      <g fill="none" stroke="#9b7ba3" strokeWidth="6" strokeOpacity=".85">
        <path d={curve("E 690,24 460,480 200,990 F 100,250 0,460 D 1430,660 1290,990")} />
      </g>
      <g fill="none" stroke="#9b7ba3" strokeWidth="2.5" strokeDasharray="14 4 3 4">
        {["A 970,35 790,75 750,150 750,245 640,420 560,540 430,700 350,860 330,990 B 380,220 390,420 380,600 300,760 210,900 180,990", "D 870,920 970,905 1260,945", "E 350,430 470,540", "F 0,20 210,60 370,170", "G 520,710 670,780 800,920", "A 130,50 140,150 290,220 350,260 310,460", "C 0,730 120,740 240,810"].map((s, i) => <path key={i} d={curve(s)} />)}
      </g>
      <Roads list={["D 1085,480 1300,590 1568,730 F 200,850"]} w={25} fill="#f0bccb" casing="#dc5a78" cw={3} casingDash="8 5" />

      <Roads list={minorRoads} w={5} fill="#fff" casing="#c6c2bf" />
      <Roads list={["B 940,560 1080,990", "B 950,560 1110,990", "B 960,570 1140,990", "C 850,60 740,330", "C 870,60 760,300"]} w={5} fill="#b3b3b3" casing="#8c8c8c" cw={1} />
      <Roads list={rails} w={6.5} fill="#6e6c6d" casing="#8f8d8d" cw={1.5} />
      <Roads list={rails} w={2} fill="#e8e8e8" dash="10 9" />
      <Roads list={darkRails} w={5} fill="#666" />
      <Roads list={["D 390,270 540,360 730,490 900,580", "C 940,670 1010,720 1300,900"]} w={5} fill="#6d6d6d" dash="12 7" />
      <Roads list={["H 1445,220 1240,470 1090,710 940,990"]} w={6} fill="#929292" casing="#a6ab5c" cw={3} />

      <Roads list={secondaries} w={9} fill="#f7fabf" casing="#a6ab5c" />
      <g clipPath="url(#island)" fill="none">
        {secondaryAvenues.slice(0, 2).concat(secondaryAvenues.slice(2)).map((a, i) => <path key={i} d={avenue(...a)} stroke="#f7fabf" strokeWidth="9" />)}
      </g>
      <Roads list={primaries} w={9} fill="#fcd6a4" casing="#c99a55" casingDash="6 3" />
      <g clipPath="url(#island)" fill="none">
        {primaryAvenues.map((a, i) => <path key={i} d={avenue(...a)} stroke="#fcd6a4" strokeWidth="8.5" />)}
      </g>
      <g fill="none" stroke="#b38aa5" strokeWidth="2.5" strokeDasharray="7 6">
        {["C 1250,24 1220,110 1050,250 980,370 980,520 1010,680 900,830 790,990 D 750,90 660,100 600,150 560,280 480,330 400,420 370,560 370,690 300,820", "E 1310,470 F 900,230", "F 1390,0 1080,600 900,990", "D 1150,0 1000,290", "D 830,340 720,640", "C 1240,60 1568,240", "C 1060,720 1568,1000", "D 720,640 840,710", "G 240,570 480,690", "F 880,470 1080,590 1350,750", "F 780,470 530,990"].map((s, i) => <path key={i} d={curve(s)} />)}
      </g>
      <Roads list={trunks} w={13} fill="#f9b29c" casing="#e38a70" />
      <Roads list={motorways} w={14} fill="#e892a2" casing="#dd6f8b" />
      <Roads list={["A 1568,820 C 20,820 60,870 150,900 D 300,20 430,80", "C 100,450 180,600 215,850 250,940", "C 0,560 60,600 20,820", "A 1300,90 1568,320 C 110,450", "D 1010,490 970,560 940,620"]} w={21} fill="#e892a2" />
      <Roads list={["H 220,560 150,690 20,830"]} w={13} fill="#f0b6c4" casing="#dd6f8b" casingDash="6 4" />
      <g fill="none" stroke="#4a3a3f" strokeWidth="1.8">
        {["C 35,640 50,540 120,440", "C 55,640 70,560 140,450", "A 500,290 240,640", "E 640,790 510,990", "G 1110,300 930,550 930,600", "G 1200,330 1100,460", "B 680,740 720,780 790,730", "B 17,912 380,905", "F 1420,750 1568,840 H 260,975", "D 925,620 930,660 970,690 1010,670", "H 370,600 400,600 490,660"].map((s, i) => <path key={i} d={curve(s)} />)}
      </g>
      <circle cx="2056" cy="1247" r="8" fill="#f7fabf" stroke="#75783f" strokeWidth="1.5" />
      {[[1070, 873], [1180, 957], [1288, 1053], [1158, 1273], [554, 1279]].map(([x, y]) => <rect key={x} x={x} y={y} width="13" height="13" fill="#7388b5" />)}
      <rect x="1856" y="1284" width="8" height="8" fill="#7388b5" /><rect x="1973" y="1343" width="9" height="9" fill="#6f8fb8" />
      {[[399, 1336], [521, 1355], [1785, 946], [1797, 1003], [1190, 1224]].map(([x, y]) => <path key={x} d={`M${x + 7} ${y}l7 13h-14z`} fill="#c79149" />)}
      <g fill="none" stroke="#3f51e8" strokeWidth="3" strokeDasharray="3 6">
        {["E 1270,460 1280,590", "E 1210,640 1200,760 1060,950 F 1050,100 1000,120 960,230", "E 1390,740 1310,880 F 1270,90 1220,130 1220,240 1160,300 1100,360 1080,440 1100,550", "F 1050,110 1110,160 1220,180", "F 890,460 970,470 1020,360", "G 70,450 70,540 E 1540,690"].map((s, i) => <path key={i} d={curve(s)} />)}
      </g>
      <g fill="none" stroke="#8a8f8a" strokeWidth="4" strokeDasharray="10 7"><path d={curve("F 920,420 980,400 1060,430")} /><path d={curve("F 1010,490 1060,460 1130,475")} /></g>
      <path d={curve("E 1465,430 1440,730")} stroke="#8b8fa5" strokeWidth="3" strokeDasharray="3 5" fill="none" />

      {labels.map((l, i) => (
        <text key={i} x={l.x} y={l.y} transform={l.r ? `rotate(${l.r} ${l.x} ${l.y})` : undefined} fontSize={l.s || 17.5} fontFamily={labelFont} fontStyle={l.i ? "italic" : "normal"} fontWeight={l.b || (l.s ? 400 : 500)}
          fill={l.c || "#383838"} stroke={l.s ? "#fff" : "#fffde8"} strokeOpacity={l.s ? 0.75 : 0.45} strokeWidth={l.s ? 4 : 2} paintOrder="stroke" strokeLinejoin="round"
          textLength={l.w} lengthAdjust={l.w ? "spacingAndGlyphs" : undefined}>{l.t}</text>
      ))}
      <rect x="262" y="985" width="63" height="58" rx="3" fill="#ebcdd2" stroke="#d99aa6" strokeWidth="2" />
      <text x="277" y="1010" fontFamily={labelFont} fontSize="21" fill="#78324b">I 95</text>
      <text x="268" y="1034" fontFamily={labelFont} fontSize="21" fill="#78324b" textLength="47" lengthAdjust="spacingAndGlyphs">NJTP</text>
      <Shield x={675} y={1137} w={66} text="I 95" />
      <Shield x={885} y={1025} w={91} text="NJ 495" />
      <Shield x={2233} y={942} w={79} text="I 278" />
      <Shield x={905} y={1195} w={92} text="CR 501" bg="#f4e3d2" border="#d9b78c" ink="#6b4a1c" />
      <Shield x={881} y={1339} w={92} text="CR 678" bg="#ecefda" border="#bcc38b" ink="#5c6620" />
      <svg x="1340" y="900" width="58" height="40" viewBox="1340 900 58 40">
        <Shield x={1343} y={903} w={92} text="CR 501" bg="#f4e3d2" border="#d9b78c" ink="#6b4a1c" />
      </svg>
    </MapCanvas>
  );
}

const MapPin = ({ x, y }: { x: number; y: number }) => (
  <Pin $x={x} $y={y} viewBox="0 0 100 82">
    <defs>
      <linearGradient id="pinFill" x1="0" y1="0" x2="0" y2="1"><stop offset="0" stopColor="#4b9bd0" /><stop offset="1" stopColor="#1c6cc4" /></linearGradient>
      <linearGradient id="pinShade" x1="0" y1="1" x2="1" y2="0"><stop offset="0" stopColor="#000" stopOpacity=".45" /><stop offset="1" stopColor="#000" stopOpacity="0" /></linearGradient>
      <filter id="soft" x="-20%" y="-20%" width="140%" height="140%"><feGaussianBlur stdDeviation="3" /></filter>
    </defs>
    <path d="M25 80L42 46Q56 30 66 40Q70 52 52 62Z" fill="url(#pinShade)" filter="url(#soft)" />
    <path d="M25 79.5C23 70 20 65 14 55C8 45 1 37 1 25A24 24 0 0 1 49 25C49 37 42 45 36 55C30 65 27 70 25 79.5Z" fill="url(#pinFill)" stroke="#2e6c97" strokeWidth="1.6" />
    <path d="M25 72C22 64 18 58 14 51C8 42 4 35 4 25A21 21 0 0 1 46 25C46 35 42 42 36 51C32 58 28 64 25 72Z" fill="none" stroke="#fff" strokeOpacity=".14" strokeWidth="2.4" />
    <circle cx="25" cy="25" r="9.4" fill="#fff" stroke="#2e6c97" strokeWidth="1.8" />
  </Pin>
);

export default function App() {
  const [city, setCity] = useState("New York");
  return (
    <>
      <GlobalStyle />
      <Page>
        <DesktopEdge />
        <Window>
          <Title><Stretch $x={0.99}>Where's The Party At?!</Stretch></Title>
          <Logo>
            <PoweredBy>powered by</PoweredBy>
            <Songkick>songkick</Songkick>
          </Logo>
          <Lead>
            <Stretch $x={1.004}>Just type in your city to see all the music events happening</Stretch>
            <br />
            <Stretch $x={1.004}>today on the map!</Stretch>
          </Lead>
          <SearchForm onSubmit={(e) => e.preventDefault()}>
            <CityInput value={city} onChange={(e) => setCity(e.target.value)} aria-label="City" />
            <SearchButton type="submit">Search</SearchButton>
          </SearchForm>
          <MapView>
            <MapDrawing />
            {pins.map(([x, y]) => <MapPin key={x} x={x} y={y} />)}
            <ZoomControl>
              <ZoomButton $divided aria-label="Zoom in"><svg width="26" height="26"><path d="M1 13h24M13 1v24" stroke="#000" strokeWidth="4.6" /></svg></ZoomButton>
              <ZoomButton aria-label="Zoom out"><svg width="26" height="26"><path d="M1 13h24" stroke="#000" strokeWidth="4.6" /></svg></ZoomButton>
            </ZoomControl>
            <Popup>
              Eliza Neals at Unknown venue (May 21, 2020) <PopupLink href="#">SongKick Link</PopupLink>
              <CloseButton aria-label="Close"><svg width="20" height="20"><path d="M2 2L18 18M18 2L2 18" stroke="#c3c3c3" strokeWidth="5" /></svg></CloseButton>
            </Popup>
          </MapView>
          <BottomLine />
        </Window>
        <RightEdge />
      </Page>
    </>
  );
}
